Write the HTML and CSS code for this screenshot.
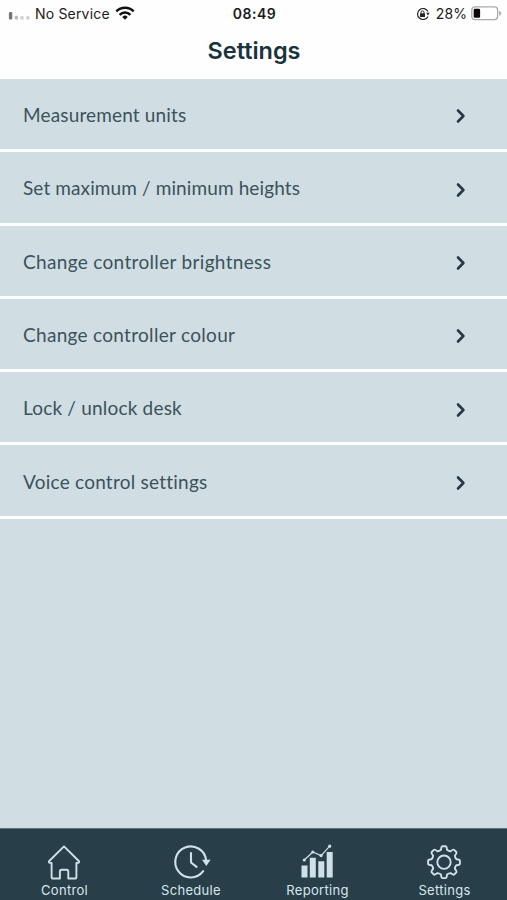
FILE: index.html
```html
<!DOCTYPE html>
<html lang="en">
<head>
<meta charset="utf-8">
<title>Settings</title>
<link rel="stylesheet" href="styles.css">
</head>
<body>
<div class="app">
  <header class="header">
    <div class="status">
      <div class="status-left">
        <svg class="signal" width="22" height="10" viewBox="0 0 22 10"><rect x="0.9" y="1" width="3.4" height="7.5" rx="1" fill="#777"/><rect x="6.8" y="4.8" width="3.2" height="3.7" rx="1" fill="#bbb"/><rect x="12.4" y="5.3" width="3.2" height="3.2" rx="1" fill="#ccc"/><rect x="18.2" y="5.3" width="3.2" height="3.2" rx="1" fill="#ccc"/></svg>
        <span class="carrier">No Service</span>
        <svg class="wifi" width="20" height="14" viewBox="0 0 20 14" fill="none" stroke="#111" stroke-width="2.4"><path d="M1.3 5.3a12.4 12.4 0 0 1 17.4 0"/><path d="M4.6 8.8a7.6 7.6 0 0 1 10.8 0"/><path d="M10 13.8l-2.7-2.9a3.8 3.8 0 0 1 5.4 0z" fill="#111" stroke="none"/></svg>
      </div>
      <span class="time">08:49</span>
      <div class="status-right">
        <svg class="lock" width="14" height="14" viewBox="0 0 14 14" fill="none" stroke="#222"><path d="M12 4.6A5.5 5.5 0 1 0 12 9.4" stroke-width="1.2"/><path d="M10.2 5.8h3.4L12 8.6z" fill="#222" stroke="none"/><rect x="4" y="6.3" width="5" height="3.7" rx=".5" fill="#222" stroke="none"/><path d="M5 6.5V5.3a1.5 1.5 0 0 1 3 0v1.2"/></svg>
        <span class="percent">28%</span>
        <svg class="battery" width="31" height="15" viewBox="0 0 31 15"><rect x=".8" y=".9" width="25.8" height="12.7" rx="3" fill="#fff" stroke="#aaa" stroke-width="1.3"/><rect x="2.7" y="2.8" width="6.4" height="8.9" rx="1.2" fill="#080808"/><path d="M28.2 4.7q2 .8 2 2.6t-2 2.6z" fill="#aaa"/></svg>
      </div>
    </div>
    <h1 class="title">Settings</h1>
  </header>
  <main class="list">
    <div class="row"><span class="label units">Measurement units</span><svg class="chevron" width="10" height="16" viewBox="0 0 10 16"><path d="M2 2.5l5.4 5.5L2 13.5"/></svg></div>
    <div class="row"><span class="label heights">Set maximum / minimum heights</span><svg class="chevron" width="10" height="16" viewBox="0 0 10 16"><path d="M2 2.5l5.4 5.5L2 13.5"/></svg></div>
    <div class="row"><span class="label brightness">Change controller brightness</span><svg class="chevron" width="10" height="16" viewBox="0 0 10 16"><path d="M2 2.5l5.4 5.5L2 13.5"/></svg></div>
    <div class="row"><span class="label">Change controller colour</span><svg class="chevron" width="10" height="16" viewBox="0 0 10 16"><path d="M2 2.5l5.4 5.5L2 13.5"/></svg></div>
    <div class="row"><span class="label lock-desk">Lock / unlock desk</span><svg class="chevron" width="10" height="16" viewBox="0 0 10 16"><path d="M2 2.5l5.4 5.5L2 13.5"/></svg></div>
    <div class="row"><span class="label voice">Voice control settings</span><svg class="chevron" width="10" height="16" viewBox="0 0 10 16"><path d="M2 2.5l5.4 5.5L2 13.5"/></svg></div>
  </main>
  <nav class="tabs">
    <div class="tab">
      <svg class="icon" width="38" height="38" viewBox="0 0 38 38"><path d="M19 3.4L34 18.2q.5 1.3-1 1.7h-1.6v14q0 1.6-1.6 1.6h-6.5v-7q0-1.8-1.8-1.8h-4.8q-1.8 0-1.8 1.8v7H8.2q-1.6 0-1.6-1.6v-14H5q-1.5-.4-1-1.7z"/></svg>
      <span>Control</span>
    </div>
    <div class="tab">
      <svg class="icon" width="38" height="38" viewBox="0 0 38 38"><path class="thick" d="M31.2 28.2A15.5 15.5 0 1 1 34.2 17.5M19 10v9.5l5.6 4.4"/><path class="solid" d="M30 16.8h8.6L34.3 23z"/></svg>
      <span>Schedule</span>
    </div>
    <div class="tab">
      <svg class="icon" width="38" height="38" viewBox="0 0 38 38"><path class="solid" d="M3.5 22.5h6v12h-6zM11.8 14.8h6v19.7h-6zM20.3 18.2h6v16.3h-6zM28.7 9h6v25.5h-6z"/><path class="line" d="M6.3 17L14.8 9l8.3 3.6L31.7 3.2"/><g class="solid"><circle cx="6.3" cy="17" r="1.6"/><circle cx="14.8" cy="9" r="1.6"/><circle cx="23.1" cy="12.6" r="1.6"/><circle cx="31.7" cy="3.2" r="1.6"/></g></svg>
      <span>Reporting</span>
    </div>
    <div class="tab">
      <svg class="icon" width="38" height="38" viewBox="-19 -19.2 38 38"><path d="M-3 -12.4Q-2.7 -15.9 -1.5 -15.9H1.5Q2.7 -15.9 3 -12.4Q5 -10.8 6.6 -10.9Q9.3 -13.1 10.2 -12.3L12.3 -10.2Q13.1 -9.3 10.9 -6.6Q10.8 -5 12.4 -3Q15.9 -2.7 15.9 -1.5V1.5Q15.9 2.7 12.4 3Q10.8 5 10.9 6.6Q13.1 9.3 12.3 10.2L10.2 12.3Q9.3 13.1 6.6 10.9Q5 10.8 3 12.4Q2.7 15.9 1.5 15.9H-1.5Q-2.7 15.9 -3 12.4Q-5 10.8 -6.6 10.9Q-9.3 13.1 -10.2 12.3L-12.3 10.2Q-13.1 9.3 -10.9 6.6Q-10.8 5 -12.4 3Q-15.9 2.7 -15.9 1.5V-1.5Q-15.9 -2.7 -12.4 -3Q-10.8 -5 -10.9 -6.6Q-13.1 -9.3 -12.3 -10.2L-10.2 -12.3Q-9.3 -13.1 -6.6 -10.9Q-5 -10.8 -3 -12.4Z"/><circle r="6.7"/></svg>
      <span>Settings</span>
    </div>
  </nav>
</div>
</body>
</html>
```
FILE: styles.css
```css
* { box-sizing: border-box; }
body { margin: 0; background: #d0dee3; }
.app { width: 507px; height: 900px; display: flex; flex-direction: column; font-family: Inter, "Liberation Sans", sans-serif; }
.header { height: 79px; background: #fefefe; }
.status { height: 28px; display: grid; grid-template-columns: 1fr auto 1fr; align-items: center; padding: 0 6px 0 8px; color: #1b1b1b; font-size: 14px; line-height: 28px; }
.status-left, .status-right { display: flex; align-items: center; }
.status-right { justify-content: flex-end; }
.signal { margin: 4px 5px 0 0; }
.carrier { letter-spacing: .18px; }
.wifi { margin: -2px 0 0 5px; }
.time { font-weight: 600; letter-spacing: .5px; }
.lock { margin-right: 6px; }
.percent { letter-spacing: .1px; }
.battery { margin-left: 4px; margin-right: -1px; margin-top: -1px; }
.title { margin: 7px 0 0; padding-left: 1px; font-size: 23.5px; line-height: 32px; font-weight: 600; letter-spacing: -.05px; text-align: center; color: #19333c; }
.list { flex: 1; background: #d0dee3; }
.row { height: 73.3px; border-bottom: 3px solid #fcfefe; display: flex; align-items: center; justify-content: space-between; padding: 2px 41.5px 0 23px; }
.label { font-family: Lato, "Open Sans", sans-serif; font-size: 19px; line-height: 28px; color: #3c525b; letter-spacing: .3px; white-space: nowrap; }
.units { letter-spacing: .15px; }
.heights { letter-spacing: .11px; }
.brightness { letter-spacing: .33px; }
.lock-desk { letter-spacing: .19px; }
.voice { letter-spacing: .24px; }
.chevron { fill: none; stroke: #263a43; stroke-width: 2.6; stroke-linecap: round; stroke-linejoin: round; margin-top: 2.6px; overflow: visible; }
.tabs { height: 72px; background: #283e49; border-top: 1px solid #60747e; display: grid; grid-template-columns: 129px 124px 129px 125px; color: #d7e7ed; }
.tab { display: flex; flex-direction: column; align-items: center; padding-top: 14px; font-size: 13px; line-height: 18px; letter-spacing: .3px; }
.icon { overflow: visible; fill: none; stroke: #cfe1e8; stroke-width: 1.9; stroke-linejoin: round; stroke-linecap: round; position: relative; left: -.4px; }
.icon .solid { fill: #cfe1e8; stroke: none; }
.icon .line { stroke-width: 1.2; }
.icon .thick { stroke-width: 2.1; }
```
